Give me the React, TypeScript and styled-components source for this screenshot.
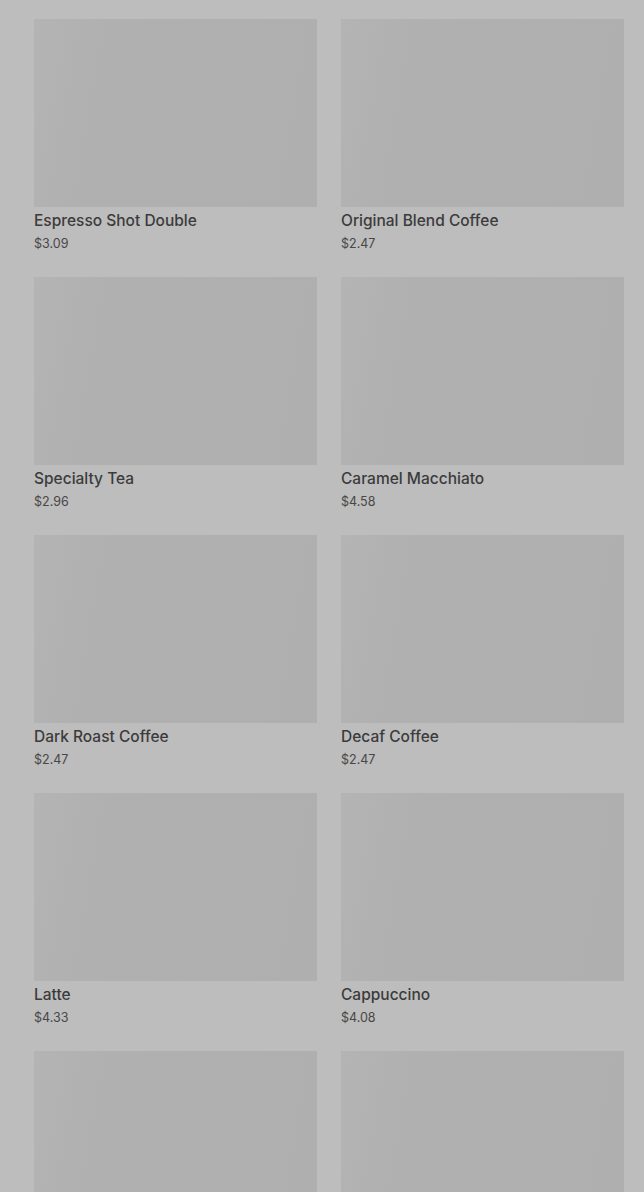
import React from "react";
import styled, { createGlobalStyle } from "styled-components";

const Global = createGlobalStyle`
  html, body { margin: 0; padding: 0; background: #bdbdbd; }
  body { font-family: Inter, Roboto, "Noto Sans", Arial, sans-serif; }
`;

const Grid = styled.div`
  display: grid;
  grid-template-columns: 283px 283px;
  column-gap: 24px;
  row-gap: 24px;
  padding: 19px 20px 0 34px;
`;

const Card = styled.div`
  display: flex;
  flex-direction: column;
`;

const Thumb = styled.div`
  height: 188px;
  background: linear-gradient(100deg, #b4b4b4 0%, #b0b0b0 25%, #afafaf 100%);
`;

const Title = styled.div`
  margin-top: 4px;
  font-size: 15.5px;
  line-height: 20px;
  font-weight: 500;
  color: #3b3b3b;
`;

const Price = styled.div`
  margin-top: 4px;
  font-size: 12.5px;
  line-height: 18px;
  color: #474747;
`;

const items = [
  ["Espresso Shot Double", "$3.09"],
  ["Original Blend Coffee", "$2.47"],
  ["Specialty Tea", "$2.96"],
  ["Caramel Macchiato", "$4.58"],
  ["Dark Roast Coffee", "$2.47"],
  ["Decaf Coffee", "$2.47"],
  ["Latte", "$4.33"],
  ["Cappuccino", "$4.08"],
  ["", ""],
  ["", ""],
];

export default function App() {
  return (
    <>
      <Global />
      <Grid>
        {items.map(([t, p], i) => (
          <Card key={i}>
            <Thumb />
            <Title>{t}</Title>
            <Price>{p}</Price>
          </Card>
        ))}
      </Grid>
    </>
  );
}
